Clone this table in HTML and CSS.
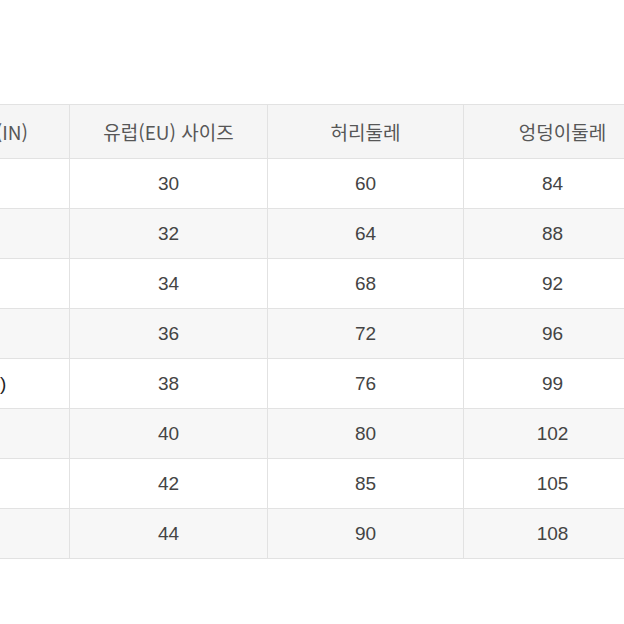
FILE: index.html
```html
<!DOCTYPE html>
<html lang="ko">
<head>
<meta charset="utf-8">
<link rel="stylesheet" href="styles.css">
</head>
<body>
<div class="frame">
  <table class="size-table">
    <colgroup>
      <col class="c1"><col class="c2"><col class="c3"><col class="c4">
    </colgroup>
    <thead>
      <tr><th>허리 사이즈(IN)</th><th>유럽(EU) 사이즈</th><th>허리둘레</th><th class="last">엉덩이둘레</th></tr>
    </thead>
    <tbody>
      <tr><td class="k">23</td><td>30</td><td>60</td><td>84</td></tr>
      <tr><td class="k">24</td><td>32</td><td>64</td><td>88</td></tr>
      <tr><td class="k">25</td><td>34</td><td>68</td><td>92</td></tr>
      <tr><td class="k">26</td><td>36</td><td>72</td><td>96</td></tr>
      <tr><td class="k">27~28(M)</td><td>38</td><td>76</td><td>99</td></tr>
      <tr><td class="k">29</td><td>40</td><td>80</td><td>102</td></tr>
      <tr><td class="k">30</td><td>42</td><td>85</td><td>105</td></tr>
      <tr><td class="k">31</td><td>44</td><td>90</td><td>108</td></tr>
    </tbody>
  </table>
</div>
</body>
</html>
```

FILE: styles.css
```css
html, body {
  margin: 0;
  padding: 0;
  background: #ffffff;
}
.frame {
  width: 624px;
  height: 624px;
  overflow: hidden;
  padding-top: 104px;
  box-sizing: border-box;
}
.size-table {
  border-collapse: collapse;
  table-layout: fixed;
  margin-left: -139px;
  width: 780px;
  font-family: "Liberation Sans", "Noto Sans CJK KR", sans-serif;
}
.c1 { width: 208px; }
.c2 { width: 198px; }
.c3 { width: 196px; }
.c4 { width: 178px; }
.size-table th,
.size-table td {
  border: 1px solid #e2e2e2;
  text-align: center;
  white-space: nowrap;
  padding: 0;
}
.size-table th {
  height: 53px;
  background: #f5f5f5;
  color: #575757;
  font-family: "Noto Sans CJK KR", "Liberation Sans", sans-serif;
  font-weight: 400;
  font-size: 19px;
}
.size-table th.last {
  padding-left: 20px;
}
.size-table td {
  height: 49px;
  color: #444444;
  font-size: 19px;
}
.size-table tbody tr:nth-child(even) td {
  background: #f7f7f7;
}
.size-table td.k {
  color: #1e1e1e;
}
```
